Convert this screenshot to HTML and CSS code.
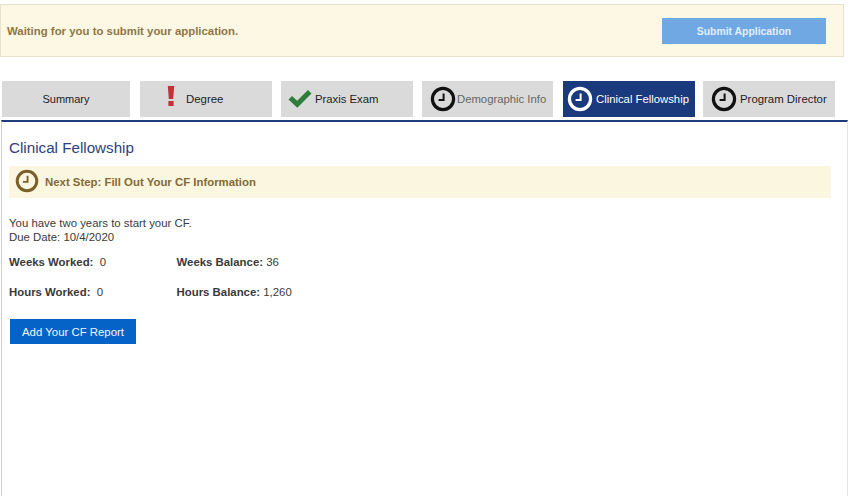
FILE: index.html
```html
<!DOCTYPE html>
<html lang="en">
<head>
<meta charset="utf-8">
<title>Clinical Fellowship</title>
<link rel="stylesheet" href="styles.css">
</head>
<body>
<svg class="defs" width="0" height="0" aria-hidden="true">
  <symbol id="clock" viewBox="0 0 26 26">
    <circle cx="13" cy="13" r="10.6" fill="none" stroke="currentColor" stroke-width="3.2"/>
    <path d="M13.6 7.4V14H8.6" fill="none" stroke="currentColor" stroke-width="2"/>
  </symbol>
</svg>
<section class="banner">
  <span class="banner-text">Waiting for you to submit your application.</span>
  <button class="submit">Submit Application</button>
</section>
<nav class="tabs">
  <a class="tab tab-summary">Summary</a>
  <a class="tab tab-degree">
    <svg class="icon-alert" viewBox="0 0 8 20"><path d="M0.8 0H7.2L6.2 13H1.8Z M1.4 15H6.6V20H1.4Z" fill="#c1333a"/></svg>
    <span>Degree</span>
  </a>
  <a class="tab tab-praxis">
    <svg class="icon-check" viewBox="0 0 24 18"><path d="M0.5 9.5L4 6L9.2 10.8L20 0L23.5 3.6L9.3 17.8Z" fill="#2f7d3a"/></svg>
    <span>Praxis Exam</span>
  </a>
  <a class="tab tab-demo">
    <svg class="icon-clock"><use href="#clock"/></svg>
    <span>Demographic Info</span>
  </a>
  <a class="tab tab-active">
    <svg class="icon-clock"><use href="#clock"/></svg>
    <span>Clinical Fellowship</span>
  </a>
  <a class="tab tab-director">
    <svg class="icon-clock"><use href="#clock"/></svg>
    <span>Program Director</span>
  </a>
</nav>
<main class="panel">
  <h1 class="title">Clinical Fellowship</h1>
  <div class="next-step">
    <svg class="icon-step"><use href="#clock"/></svg>
    <span>Next Step: Fill Out Your CF Information</span>
  </div>
  <p class="intro">You have two years to start your CF.<br>Due Date: 10/4/2020</p>
  <div class="stats">
    <div class="stat"><b>Weeks Worked:</b>&nbsp; 0</div>
    <div class="stat"><b>Weeks Balance:</b> 36</div>
    <div class="stat"><b>Hours Worked:</b>&nbsp; 0</div>
    <div class="stat"><b>Hours Balance:</b> 1,260</div>
  </div>
  <button class="add">Add Your CF Report</button>
</main>
</body>
</html>
```
FILE: styles.css
```css
* { box-sizing: border-box; }
html, body { margin: 0; padding: 0; height: 100%; overflow: hidden; }
body {
  background: #fff;
  color: #3a3a3a;
  font-family: "Liberation Sans", Arial, sans-serif;
  font-size: 12px;
  padding-top: 4px;
}
.defs { position: absolute; }
.banner {
  width: 844px;
  height: 53px;
  background: #fdf8e3;
  border: 1px solid #e8e2cd;
  display: flex;
  align-items: center;
  justify-content: space-between;
  padding: 0 17px 0 6px;
}
.banner-text { color: #8f7647; font-weight: bold; font-size: 11.4px; }
.submit {
  width: 164px;
  height: 26px;
  margin-top: 1px;
  border: 0;
  background: #6fa8e3;
  color: #e4eefa;
  font: bold 10.4px "Liberation Sans", Arial, sans-serif;
}
.tabs {
  display: flex;
  margin: 24px 0 0 2px;
  height: 36px;
}
.tab {
  width: 132px;
  margin-right: 9px;
  background: #dadada;
  color: #222;
  font-size: 11.4px;
  display: flex;
  align-items: center;
  justify-content: center;
}
.tab-summary { width: 128px; margin-right: 10px; font-size: 11px; }
.tab-degree { justify-content: flex-start; padding-left: 27px; gap: 11px; }
.tab-praxis { justify-content: flex-start; padding-left: 7px; gap: 3px; margin-right: 9px; font-size: 11.3px; }
.tab-demo { width: 131px; color: #666; justify-content: flex-start; padding-left: 8px; gap: 1px; margin-right: 10px; font-size: 11.3px; }
.tab-active { background: #1b3a7d; color: #fff; justify-content: flex-start; padding-left: 4px; gap: 3px; margin-right: 8px; font-size: 11.3px; }
.tab-director { justify-content: flex-start; padding-left: 8px; gap: 3px; margin-right: 0; }
.icon-alert { width: 8px; height: 20px; margin-top: -6px; }
.icon-check { width: 24px; height: 18px; margin-top: -1px; }
.icon-clock { width: 26px; height: 26px; margin-top: -1px; color: #111; flex: none; }
.tab-active .icon-clock { color: #fff; }
.panel {
  margin: 3px 0 0 1px;
  width: 847px;
  height: 400px;
  border-top: 2px solid #1f3d7c;
  border-left: 1px solid #d0d0d0;
  border-right: 1px solid #e4e4e4;
  padding: 17px 0 0 7px;
}
.title {
  margin: 0;
  font-size: 15.2px;
  line-height: 18px;
  font-weight: normal;
  color: #2f4278;
}
.next-step {
  margin: 9px 0 0 0;
  width: 822px;
  height: 32px;
  background: #fbf6df;
  color: #846a36;
  font-weight: bold;
  font-size: 11.4px;
  display: flex;
  align-items: center;
  padding-left: 6px;
  gap: 6px;
}
.next-step span { margin-top: -1px; }
.icon-step { width: 24px; height: 24px; margin-top: -2px; color: #7b5f2b; flex: none; }
.intro { margin: 18px 0 0 0; font-size: 11.4px; line-height: 14px; }
.stats {
  display: grid;
  grid-template-columns: 167.5px 1fr;
  grid-auto-rows: 30px;
  margin-top: 11px;
  font-size: 11.4px;
  line-height: 14px;
}
.add {
  display: block;
  margin: 4px 0 0 1px;
  width: 126px;
  height: 25px;
  border: 0;
  background: #0563c8;
  color: #f2f6fc;
  font: 11.4px "Liberation Sans", Arial, sans-serif;
}
```
